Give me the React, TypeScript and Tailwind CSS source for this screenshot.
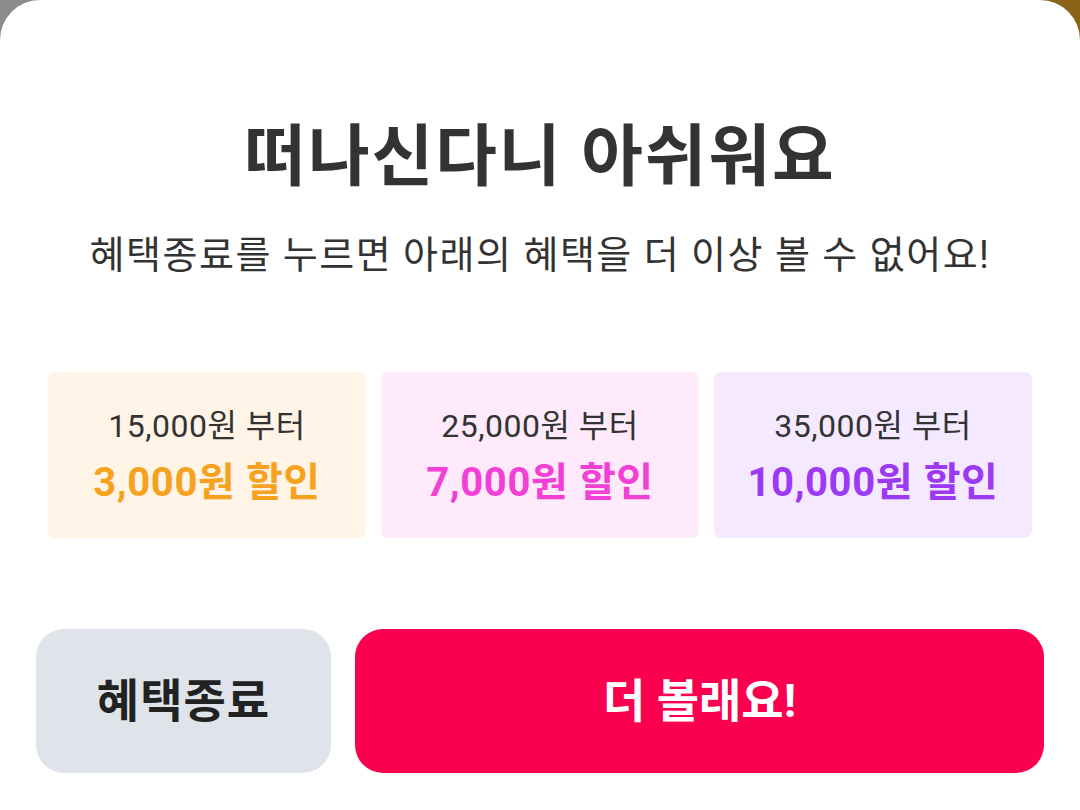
import React from 'react';

const tiers = [
  { from: '15,000원 부터', off: '3,000원 할인', bg: 'bg-[#fff4e6]', fg: 'text-[#f7a21e]' },
  { from: '25,000원 부터', off: '7,000원 할인', bg: 'bg-[#feeafa]', fg: 'text-[#f23fd6]' },
  { from: '35,000원 부터', off: '10,000원 할인', bg: 'bg-[#f5e9ff]', fg: 'text-[#9b3af2]' },
];

export default function App() {
  return (
    <div
      className="w-[1080px] h-[810px] bg-gradient-to-r from-[#8c8c8c] via-[#8a7a50] to-[#8a6214]"
      style={{ fontFamily: 'Roboto, "Noto Sans CJK KR", sans-serif' }}
    >
      <div className="h-full bg-white rounded-t-[40px] flex flex-col items-center">
        <h1 className="mt-[122px] text-[67px] leading-[70px] tracking-[2px] font-bold text-[#333333]">떠나신다니 아쉬워요</h1>
        <p className="mt-[41px] text-[38px] leading-[44px] tracking-[1.5px] text-[#333333]">
          혜택종료를 누르면 아래의 혜택을 더 이상 볼 수 없어요!
        </p>

        {/* discount tiers */}
        <div className="mt-[95px] w-full px-[48px] grid grid-cols-3 gap-[15px]">
          {tiers.map((t) => (
            <div key={t.from} className={`h-[166px] rounded-[7px] ${t.bg} flex flex-col items-center pt-[35px]`}>
              <span className="text-[32px] leading-[38px] tracking-[0.5px] text-[#333333]">{t.from}</span>
              <span className={`mt-[14px] text-[40px] leading-[48px] tracking-[0.6px] font-bold ${t.fg}`}>{t.off}</span>
            </div>
          ))}
        </div>

        <div className="mt-[91px] w-full px-[36px] flex gap-[24px]">
          <button className="w-[295px] h-[144px] rounded-[28px] bg-[#dee4ea] text-[46px] tracking-[1px] font-bold text-[#222222]">
            혜택종료
          </button>
          <button className="flex-1 h-[144px] rounded-[28px] bg-[#fb004e] text-[46px] font-bold text-white">
            더 볼래요!
          </button>
        </div>
      </div>
    </div>
  );
}
